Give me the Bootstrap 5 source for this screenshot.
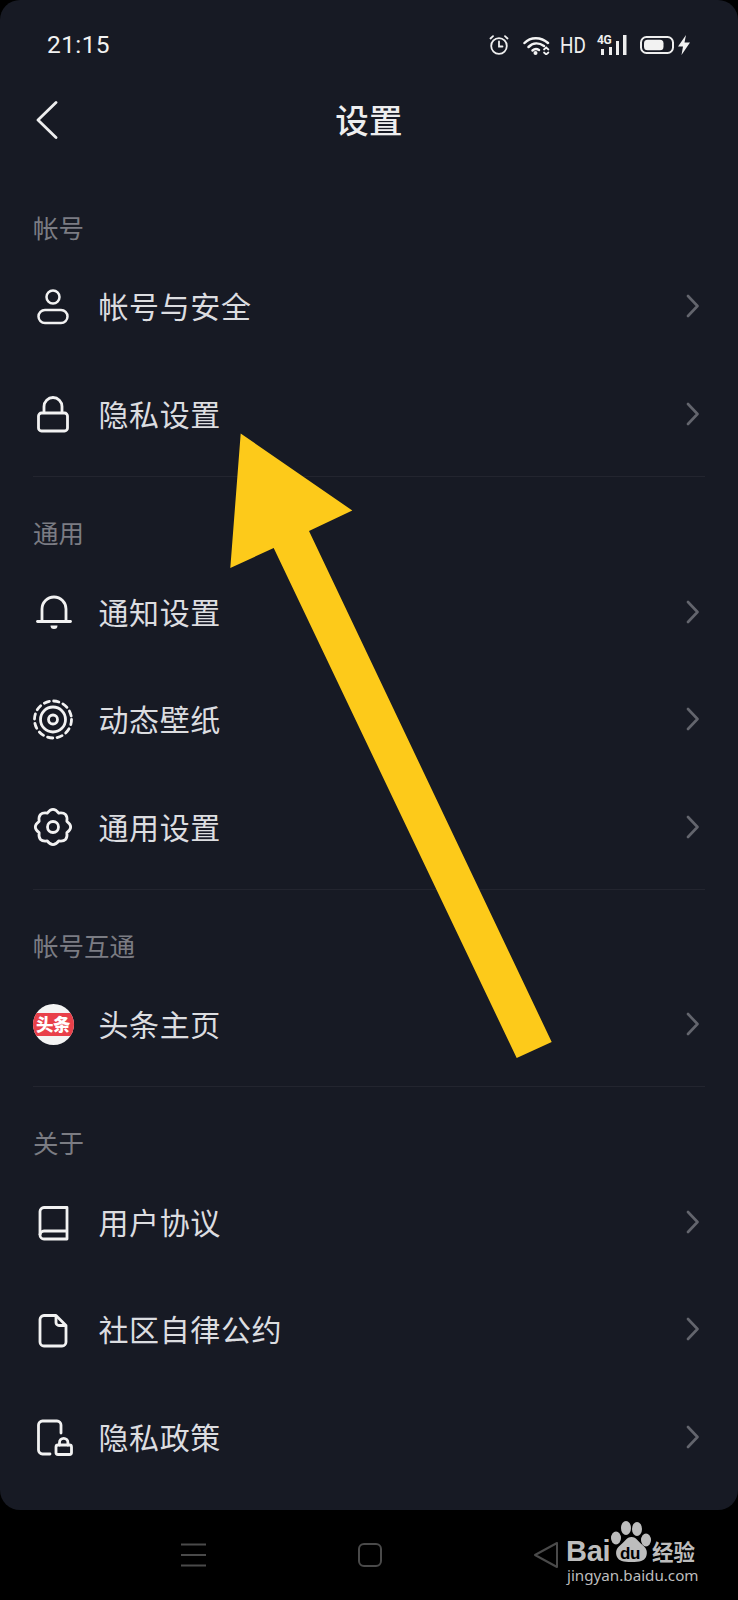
<!DOCTYPE html>
<html lang="zh-CN">
<head>
<meta charset="utf-8">
<title>设置</title>
<link rel="stylesheet" href="https://cdn.jsdelivr.net/npm/bootstrap@5.3.0/dist/css/bootstrap.min.css">
<style>
html,body{margin:0;background:#000;}
body{font-family:"Noto Sans CJK SC","Noto Sans",sans-serif;width:738px;height:1600px;overflow:hidden;position:relative;}
.screen-panel{background:#171a24;height:1510px;border-radius:20px;color:#e2e3e6;}
.status-row{height:90px;padding:0 48px 0 47px;}
.clock-text{font:400 24.5px/1 Roboto,sans-serif;letter-spacing:.4px;color:#f2f2f2;}
.hd-text{font:400 22.5px/1 Roboto,sans-serif;color:#eee;width:25px;margin-left:10px;display:inline-block;transform:scaleX(.84);transform-origin:left center;white-space:nowrap;}
.sig-box{width:30px;height:20px;position:relative;margin-left:12px;}
.sig-4g{position:absolute;left:0;top:-1px;font:700 12px/1 Roboto,sans-serif;color:#eee;letter-spacing:-.5px;}
.title-row{height:60px;padding-left:35px;}
.back-slot{width:24px;}
.page-title{font-size:33.5px;font-weight:500;line-height:1;color:#eeeeef;text-align:center;flex:1;padding-right:59px;padding-bottom:3px;letter-spacing:.3px;}
.group-first{margin-top:52.5px;}
.group-sep{border-bottom:1px solid #23252f;margin:8px 33px 0;height:0;}
.group-sep-a{margin-top:8.5px;}
.group-head{height:50px;padding-left:33px;font-size:25.5px;color:#7b7c83;line-height:48px;}
.group-gap{margin-top:31px;}
.item-row{height:107.5px;padding:0 39px 0 33px;}
.item-ico{width:40px;height:40px;flex:none;margin-right:25.5px;}
.item-ico svg{display:block;overflow:visible;}
.item-text{font-size:30px;letter-spacing:.6px;font-weight:400;line-height:1;flex:1;color:#dcdde0;padding-bottom:2px;}
.tt-logo{width:41px;height:41px;border-radius:50%;background:#f4f4f4;overflow:hidden;flex:none;}
.tt-band{background:#e9404a;height:23px;width:100%;color:#fff;font-size:17.5px;font-weight:900;line-height:22px;text-align:center;letter-spacing:-.5px;}
.nav-strip{height:90px;gap:152px;}
.arrow-layer{position:absolute;left:0;top:0;}
.mark-box{position:absolute;left:565px;top:1518px;width:140px;height:70px;color:#bdbdbd;}
.mark-bai{position:absolute;left:1px;top:19px;font:700 29px/1 "Liberation Sans",sans-serif;letter-spacing:-.3px;}
.mark-du{position:absolute;left:55px;top:27px;font:700 17px/1 "Liberation Sans",sans-serif;color:#000;letter-spacing:-.5px;}
.mark-cn{position:absolute;left:87px;top:22px;font-size:21.5px;font-weight:700;line-height:1;}
.mark-url{position:absolute;left:2px;top:49px;font:400 15.2px/1.1 "Noto Sans",sans-serif;white-space:nowrap;}
.gap-a{margin-left:14px;}
.gap-b{margin-left:13px;}
.gap-c{margin-left:4px;}
</style>
</head>
<body>
<div class="screen-panel">
  <div class="status-row d-flex align-items-center justify-content-between">
    <span class="clock-text">21:15</span>
    <div class="d-flex align-items-center">
      <svg width="20" height="20" viewBox="0 0 20 20" fill="none" stroke="#f0f0f0" stroke-width="1.800" stroke-linecap="round"><circle cx="10" cy="11" r="7.800"/><path d="M10 6.500V11.500H13.500M1.500 3.500L4 1.200M18.500 3.500L16 1.200"/></svg>
      <svg class="gap-a" width="27" height="19" viewBox="0 0 27 19" fill="none" stroke="#f4f4f4" stroke-width="2.500" stroke-linecap="round"><path d="M1.500 7C7.500 .5 18 .5 25 7"/><path d="M5.500 11C10 6.500 16 6.500 21 10"/><path d="M9.500 14.500C11.500 12.800 14 12.800 16 14"/><circle cx="12.500" cy="17" r="2" fill="#f4f4f4" stroke="none"/><path d="M21 13.500l2.200-2 2.200 2M21 16.500l2.200 2 2.200-2" stroke-width="1.700"/></svg>
      <span class="hd-text">HD</span>
      <div class="sig-box">
        <span class="sig-4g">4G</span>
        <svg width="30" height="20" viewBox="0 0 30 20" fill="#eee" class="d-block"><rect x="4" y="14" width="3" height="6"/><rect x="12" y="12" width="3" height="8"/><rect x="19" y="6" width="3" height="14"/><rect x="26" y="0" width="3.500" height="20"/></svg>
      </div>
      <svg class="gap-b" width="34" height="18" viewBox="0 0 34 18" fill="none"><rect x="1" y="1" width="32" height="16" rx="5.500" stroke="#eee" stroke-width="2"/><rect x="4" y="3.800" width="19.500" height="10.400" rx="3.500" fill="#f2f2f2"/></svg>
      <svg class="gap-c" width="12" height="20" viewBox="0 0 12 20" fill="#f2f2f2"><path d="M8 0L0 11.500H5L3.500 20L12 7.500H6.500Z"/></svg>
    </div>
  </div>

  <div class="title-row d-flex align-items-center">
    <div class="back-slot">
      <svg class="d-block" width="24" height="38" viewBox="0 0 24 38" fill="none" stroke="#eeeeef" stroke-width="2.800" stroke-linecap="round" stroke-linejoin="round"><path d="M21 1.500L3 19L21 36.500"/></svg>
    </div>
    <div class="page-title">设置</div>
  </div>

  <section class="group-first">
    <div class="group-head">帐号</div>
    <div class="item-row d-flex align-items-center">
      <div class="item-ico"><svg width="40" height="40" viewBox="0 0 40 40" fill="none" stroke="#f2f2f2" stroke-width="2.500"><circle cx="20" cy="11" r="6.500"/><rect x="5.500" y="24" width="29" height="13" rx="6.500"/></svg></div>
      <div class="item-text">帐号与安全</div>
      <svg width="13" height="24" viewBox="0 0 13 24" fill="none" stroke="#63656d" stroke-width="2.600" stroke-linecap="round" stroke-linejoin="round"><path d="M2 2L11.500 12L2 22"/></svg>
    </div>
    <div class="item-row d-flex align-items-center">
      <div class="item-ico"><svg width="40" height="40" viewBox="0 0 40 40" fill="none" stroke="#f2f2f2" stroke-width="2.800" stroke-linejoin="round"><rect x="5.500" y="19" width="29" height="18" rx="3"/><path d="M11 19V12.500a9 9 0 0 1 18 0V19"/></svg></div>
      <div class="item-text">隐私设置</div>
      <svg width="13" height="24" viewBox="0 0 13 24" fill="none" stroke="#63656d" stroke-width="2.600" stroke-linecap="round" stroke-linejoin="round"><path d="M2 2L11.500 12L2 22"/></svg>
    </div>
    <div class="group-sep group-sep-a"></div>
  </section>

  <section class="group-gap">
    <div class="group-head">通用</div>
    <div class="item-row d-flex align-items-center">
      <div class="item-ico"><svg width="40" height="40" viewBox="0 0 40 40" fill="none" stroke="#f2f2f2" stroke-width="2.800" stroke-linecap="round"><g transform="translate(0 3)"><path d="M4.500 26.500H37.500"/><path d="M9 26V14a12 12 0 0 1 24 0V26"/><path d="M17.500 30.500h7a3.500 3.500 0 0 1-7 0Z" fill="#f2f2f2" stroke="none"/></g></svg></div>
      <div class="item-text">通知设置</div>
      <svg width="13" height="24" viewBox="0 0 13 24" fill="none" stroke="#63656d" stroke-width="2.600" stroke-linecap="round" stroke-linejoin="round"><path d="M2 2L11.500 12L2 22"/></svg>
    </div>
    <div class="item-row d-flex align-items-center">
      <div class="item-ico"><svg width="40" height="40" viewBox="0 0 40 40" fill="none" stroke="#f2f2f2" stroke-width="2.800"><circle cx="20" cy="20.500" r="18.500" stroke-dasharray="5.300 4.400" stroke-linecap="round"/><circle cx="20" cy="20.500" r="12.500"/><circle cx="20" cy="20.500" r="4.500"/></svg></div>
      <div class="item-text">动态壁纸</div>
      <svg width="13" height="24" viewBox="0 0 13 24" fill="none" stroke="#63656d" stroke-width="2.600" stroke-linecap="round" stroke-linejoin="round"><path d="M2 2L11.500 12L2 22"/></svg>
    </div>
    <div class="item-row d-flex align-items-center">
      <div class="item-ico"><svg width="40" height="40" viewBox="0 0 40 40" fill="none" stroke="#f2f2f2" stroke-width="2.800" stroke-linejoin="round"><g transform="translate(0 2)"><path d="M14.260 4.140Q20-3.500 25.740 4.140Q35.200 2.800 33.860 12.260Q41.500 18 33.860 23.740Q35.200 33.200 25.740 31.860Q20 39.500 14.260 31.860Q4.800 33.200 6.140 23.740Q-1.500 18 6.140 12.260Q4.800 2.800 14.260 4.140Z"/><circle cx="20" cy="18" r="5.500"/></g></svg></div>
      <div class="item-text">通用设置</div>
      <svg width="13" height="24" viewBox="0 0 13 24" fill="none" stroke="#63656d" stroke-width="2.600" stroke-linecap="round" stroke-linejoin="round"><path d="M2 2L11.500 12L2 22"/></svg>
    </div>
    <div class="group-sep"></div>
  </section>

  <section class="group-gap">
    <div class="group-head">帐号互通</div>
    <div class="item-row d-flex align-items-center">
      <div class="item-ico d-flex align-items-center justify-content-center">
        <div class="tt-logo d-flex align-items-center"><div class="tt-band">头条</div></div>
      </div>
      <div class="item-text">头条主页</div>
      <svg width="13" height="24" viewBox="0 0 13 24" fill="none" stroke="#63656d" stroke-width="2.600" stroke-linecap="round" stroke-linejoin="round"><path d="M2 2L11.500 12L2 22"/></svg>
    </div>
    <div class="group-sep"></div>
  </section>

  <section class="group-gap">
    <div class="group-head">关于</div>
    <div class="item-row d-flex align-items-center">
      <div class="item-ico"><svg width="40" height="40" viewBox="0 0 40 40" fill="none" stroke="#f2f2f2" stroke-width="2.800" stroke-linejoin="round"><g transform="translate(0 2)"><path d="M34 3.500H11a4 4 0 0 0-4 4V31a4 4 0 0 0 4 4H34Z"/><path d="M7 31a4 4 0 0 1 4-4H34"/></g></svg></div>
      <div class="item-text">用户协议</div>
      <svg width="13" height="24" viewBox="0 0 13 24" fill="none" stroke="#63656d" stroke-width="2.600" stroke-linecap="round" stroke-linejoin="round"><path d="M2 2L11.500 12L2 22"/></svg>
    </div>
    <div class="item-row d-flex align-items-center">
      <div class="item-ico"><svg width="40" height="40" viewBox="0 0 40 40" fill="none" stroke="#f2f2f2" stroke-width="2.800" stroke-linejoin="round"><g transform="translate(0 3)"><path d="M11 3.500H23L33 13.500V30a4 4 0 0 1-4 4H11a4 4 0 0 1-4-4V7.500a4 4 0 0 1 4-4Z"/><path d="M23 3.500V10.500a3 3 0 0 0 3 3H33"/></g></svg></div>
      <div class="item-text">社区自律公约</div>
      <svg width="13" height="24" viewBox="0 0 13 24" fill="none" stroke="#63656d" stroke-width="2.600" stroke-linecap="round" stroke-linejoin="round"><path d="M2 2L11.500 12L2 22"/></svg>
    </div>
    <div class="item-row d-flex align-items-center">
      <div class="item-ico"><svg width="40" height="40" viewBox="0 0 40 40" fill="none" stroke="#f2f2f2" stroke-width="2.800" stroke-linecap="round" stroke-linejoin="round"><g transform="translate(0 2)"><path d="M17 35H9.500a4 4 0 0 1-4-4V6a4 4 0 0 1 4-4H24a4 4 0 0 1 4 4V14"/><rect x="23" y="26" width="15.500" height="9.500" rx="2"/><path d="M26.500 26V23.500a4.200 4.200 0 0 1 8.400 0V26"/></g></svg></div>
      <div class="item-text">隐私政策</div>
      <svg width="13" height="24" viewBox="0 0 13 24" fill="none" stroke="#63656d" stroke-width="2.600" stroke-linecap="round" stroke-linejoin="round"><path d="M2 2L11.500 12L2 22"/></svg>
    </div>
  </section>
</div>

<div class="nav-strip d-flex align-items-center justify-content-center">
  <svg width="25" height="24" viewBox="0 0 25 24" stroke="#4a4a4a" stroke-width="2" class="d-block"><path d="M0 1.500H25M0 12H25M0 22.500H25"/></svg>
  <svg width="24" height="24" viewBox="0 0 24 24" fill="none" stroke="#4a4a4a" stroke-width="2" class="d-block"><rect x="1" y="1" width="22" height="22" rx="5"/></svg>
  <svg width="24" height="26" viewBox="0 0 24 26" fill="none" stroke="#4a4a4a" stroke-width="2" stroke-linejoin="round" class="d-block"><path d="M23 1V25L1 13Z"/></svg>
</div>

<svg class="arrow-layer" width="738" height="1600" viewBox="0 0 738 1600"><polygon fill="#fdca1a" points="240.700,433.500 352.300,510.500 309,531 551.700,1042 516.700,1058 273.700,548 230.300,568"/></svg>

<div class="mark-box">
  <svg class="position-absolute top-0 start-0" width="140" height="50" viewBox="0 0 140 50" fill="#bdbdbd"><ellipse cx="51" cy="20" rx="5" ry="6.500"/><ellipse cx="61" cy="10" rx="5" ry="7"/><ellipse cx="72" cy="11" rx="5" ry="7"/><ellipse cx="81" cy="22" rx="5" ry="6.500"/><path d="M66.500 19c5 0 7 5 11 8 4 3 5.500 7 3.500 12-2 4-6 5-14.500 5s-12.500-1-14.500-5c-2-5-.5-9 3.500-12 4-3 6-8 11-8Z"/></svg>
  <span class="mark-bai">Bai</span>
  <span class="mark-du">du</span>
  <span class="mark-cn">经验</span>
  <span class="mark-url">jingyan.baidu.com</span>
</div>
</body>
</html>
